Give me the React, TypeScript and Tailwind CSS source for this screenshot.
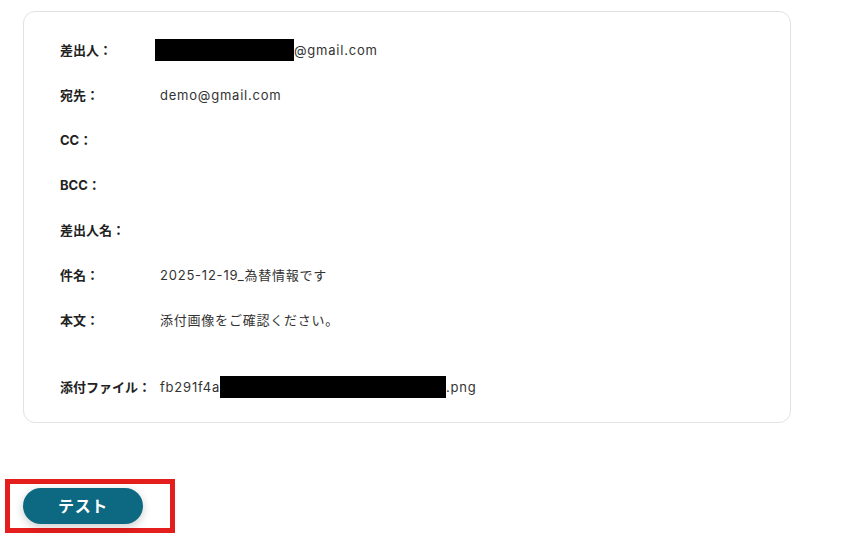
const latin = "font-['Inter','Noto_Sans_CJK_JP',sans-serif]"

type Row = { label: string; value?: React.ReactNode; tall?: boolean }

function Redacted({ w }: { w: number }) {
  return <span className="inline-block h-[22px] bg-black align-middle" style={{ width: w }} />
}

const rows: Row[] = [
  {
    label: "差出人：",
    value: (
      <span className="-ml-[5px] flex items-center">
        <Redacted w={139} />
        <span>@gmail.com</span>
      </span>
    ),
  },
  { label: "宛先：", value: "demo@gmail.com" },
  { label: "CC：" },
  { label: "BCC：" },
  { label: "差出人名：" },
  { label: "件名：", value: "2025-12-19_為替情報です" },
  { label: "本文：", value: "添付画像をご確認ください。", tall: true },
  {
    label: "添付ファイル：",
    value: (
      <span className="flex items-center">
        <span>fb291f4a</span>
        <Redacted w={226} />
        <span>.png</span>
      </span>
    ),
  },
]

export default function App() {
  return (
    <div className={`min-h-[549px] w-[850px] bg-white text-[#333] ${latin}`}>
      <div className="pt-[11px] pl-[23px]">
        <div className="flex h-[412px] w-[768px] flex-col gap-[25px] rounded-xl border border-[#e2e2e2] pt-[28px] pl-[36px]">
          {rows.map((r) => (
            <div key={r.label} className={`flex text-[13px] leading-5 ${r.tall ? "h-[42px]" : "h-5"}`}>
              <span className="w-[100px] shrink-0 font-bold text-[#222]">{r.label}</span>
              <span className="flex h-5 items-center tracking-[0.06em]">{r.value}</span>
            </div>
          ))}
        </div>
      </div>

      <div className="mt-[56px] ml-[5px] inline-flex border-[5px] border-[#e41d1d] py-[4px] pr-[27px] pl-[13px]">
        <button className="h-[36px] w-[120px] rounded-full bg-[#0d6982] text-[16px] font-bold tracking-[0.04em] text-white shadow-[0_3px_10px_rgba(0,0,0,0.2)]">
          テスト
        </button>
      </div>
    </div>
  )
}
